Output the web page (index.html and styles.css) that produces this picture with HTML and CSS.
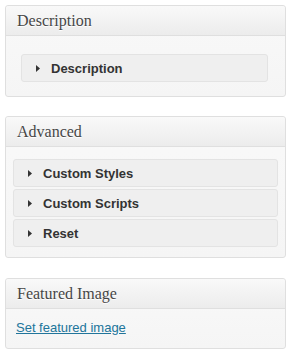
FILE: index.html
```html
<!DOCTYPE html>
<html lang="en">
<head>
    <meta charset="UTF-8">
    <title>Post boxes</title>
    <link rel="stylesheet" href="styles.css">
</head>
<body>
    <div class="postbox first">
        <h3 class="hndle">Description</h3>
        <div class="inside pad-wide">
            <div class="toggle"><svg class="arrow" width="4" height="7" viewBox="0 0 4 7"><polygon points="0,0 4,3.5 0,7"/></svg>Description</div>
        </div>
    </div>

    <div class="postbox">
        <h3 class="hndle">Advanced</h3>
        <div class="inside">
            <div class="toggle"><svg class="arrow" width="4" height="7" viewBox="0 0 4 7"><polygon points="0,0 4,3.5 0,7"/></svg>Custom Styles</div>
            <div class="toggle"><svg class="arrow" width="4" height="7" viewBox="0 0 4 7"><polygon points="0,0 4,3.5 0,7"/></svg>Custom Scripts</div>
            <div class="toggle"><svg class="arrow" width="4" height="7" viewBox="0 0 4 7"><polygon points="0,0 4,3.5 0,7"/></svg>Reset</div>
        </div>
    </div>

    <div class="postbox">
        <h3 class="hndle">Featured Image</h3>
        <div class="inside link-box">
            <a href="#">Set featured image</a>
        </div>
    </div>
</body>
</html>
```

FILE: styles.css
```css
body {
    margin: 0;
    padding: 5px 0 0 5px;
    background: #fff;
    font-family: "Liberation Sans", Arial, sans-serif;
    font-size: 13px;
}

.postbox {
    width: 279px;
    border: 1px solid #dfdfdf;
    border-radius: 3px;
    background: linear-gradient(to bottom, #f9f9f9, #f5f5f5);
    margin-bottom: 20px;
}

.postbox.first {
    margin-bottom: 19px;
}

/* Box header */
.hndle {
    margin: 0;
    height: 29px;
    line-height: 29px;
    padding-left: 11px;
    font-family: "Liberation Serif", Georgia, serif;
    font-size: 16px;
    font-weight: normal;
    color: #464646;
    text-shadow: 0 1px 0 #fff;
    background: linear-gradient(to bottom, #f9f9f9, #ececec);
    border-bottom: 1px solid #dfdfdf;
    border-radius: 3px 3px 0 0;
}

.inside {
    display: flex;
    flex-direction: column;
    gap: 2px;
    padding: 12px 7px 10px 7px;
}

.inside.pad-wide {
    padding: 18px 17px 14px 15px;
}

/* Collapsible rows */
.toggle {
    display: flex;
    align-items: center;
    height: 26px;
    border: 1px solid #e3e3e3;
    border-radius: 3px;
    background: #efefef;
    font-weight: bold;
    color: #333;
}

.arrow {
    flex: none;
    margin: 0 11px 0 14px;
    fill: #333;
}

.link-box {
    display: block;
    padding: 11px 10px 12px 10px;
    line-height: 16px;
}

.link-box a {
    color: #21759b;
    text-decoration: underline;
}
```
